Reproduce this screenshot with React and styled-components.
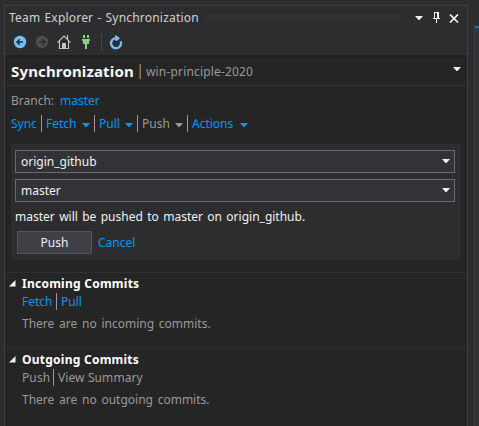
import React from 'react';
import styled, { createGlobalStyle } from 'styled-components';

const Global = createGlobalStyle`
  * { box-sizing: border-box; }
  body {
    margin: 0;
    background: #2d2d30;
    color: #999999;
    font: 12px/16px "Noto Sans", "Open Sans", sans-serif;
  }
`;

const Shell = styled.div`
  display: flex;
  justify-content: space-between;
  height: 426px;
  padding-left: 4px;
  overflow: hidden;
`;
const Panel = styled.section`
  display: flex;
  flex-direction: column;
  width: 464px;
  margin-top: 5px;
  border: 1px solid #3f3f46;
  border-bottom: 0;
  background: #252526;
`;
const Neighbour = styled.aside`
  width: 5px;
  margin-top: 26px;
  border-left: 1px solid #3f3f46;
  background: linear-gradient(#007acc 2px, #333337 2px);
`;
const Titlebar = styled.header`
  display: flex;
  align-items: center;
  height: 24px;
  padding: 0 8px 0 4px;
  background: #2d2d30;
`;
const WindowTitle = styled.h1`
  width: 190px;
  margin: 0 6px 0 0;
  color: #d0d0d0;
  font-size: 12px;
  font-weight: 400;
  letter-spacing: 0.2px;
  word-spacing: 0.8px;
  white-space: nowrap;
`;
const Grip = styled.div`
  width: 200px;
  height: 5px;
  margin-bottom: 1px;
  background-image:
    conic-gradient(from 270deg at 1px 1px, #4a4a4e 90deg, transparent 0),
    conic-gradient(from 270deg at 1px 1px, #4a4a4e 90deg, transparent 0);
  background-size: 4px 4px;
  background-position: 0 0, 2px 2px;
`;
const WindowButtons = styled.div`
  display: flex;
  align-items: center;
  gap: 9px;
  margin-left: auto;
  svg { display: block; }
  svg:first-child { margin-right: 1px; }
`;
const Toolbar = styled.nav`
  display: flex;
  align-items: center;
  height: 25px;
  padding: 0 0 1px 7px;
  background: #2d2d30;
  svg { display: block; flex: none; margin-right: 6px; }
`;
const ToolDivider = styled.i`
  width: 1px;
  height: 18px;
  margin: 0 6px 0 1px;
  background: #46464a;
`;
const PageHeader = styled.div`
  display: flex;
  align-items: center;
  height: 31px;
  padding: 1px 6px 0;
  border-bottom: 1px solid #2f2f32;
  background: linear-gradient(#202021, #252526 5px);
  > svg { margin-bottom: 4px; }
`;
const PageTitle = styled.h2`
  width: 128px;
  margin: 0;
  color: #f6f6f6;
  font-size: 15px;
  line-height: 22px;
  letter-spacing: 0.15px;
`;
const Project = styled.span`
  display: flex;
  flex: 1;
  align-items: center;
  gap: 5px;
  padding-top: 2px;
  letter-spacing: 0.17px;
  &::before {
    content: "";
    width: 2px;
    height: 15px;
    background: linear-gradient(90deg, #50555c 50%, #8f7250 50%);
  }
`;
const Branch = styled.div`
  display: flex;
  gap: 6px;
  padding: 7px 6px 0;
`;
const Link = styled.a`
  color: #0097fb;
  white-space: nowrap;
`;
const Commands = styled.div`
  display: flex;
  align-items: center;
  height: 17px;
  margin: ${p => p.$margin};
  letter-spacing: ${p => p.$spacing || '0'};
`;
const Command = styled.div`
  display: flex;
  align-items: center;
  justify-content: space-between;
  height: 17px;
  width: ${p => p.$width}px;
  padding-right: 4px;
  color: ${p => (p.$disabled ? '#999999' : '#0097fb')};
  & + & {
    border-left: 1px solid #999999;
    padding-left: 4px;
  }
  ${Link} { color: inherit; line-height: 17px; }
  svg { flex: none; margin-top: 3px; }
`;
const PushForm = styled.form`
  display: flex;
  flex-direction: column;
  height: 116px;
  margin: 12px 6px 12px;
  padding: 6px 6px 0 4px;
  background: #2d2d30;
`;
const Combo = styled.div`
  display: flex;
  align-items: center;
  justify-content: space-between;
  flex: none;
  height: 23px;
  margin-bottom: 6px;
  padding: 0 4px 0 5px;
  border: 1px solid #6a6a75;
  background: #333337;
  color: #f1f1f1;
  svg { margin-bottom: 1px; }
`;
const Notice = styled.p`
  margin: 1px 0 6px;
  color: #f1f1f1;
  word-spacing: 1.25px;
  white-space: nowrap;
`;
const Buttons = styled.div`
  display: flex;
  align-items: center;
  gap: 6px;
  padding-left: 2px;
`;
const PushButton = styled.button`
  width: 75px;
  height: 23px;
  padding: 0;
  border: 1px solid #555555;
  background: #3f3f46;
  color: #f1f1f1;
  font: inherit;
`;
const Section = styled.section`
  height: 76px;
  padding: 3px 6px 0 4px;
  border-top: 1px solid #2f2f32;
`;
const SectionTitle = styled.h3`
  display: flex;
  align-items: center;
  gap: 6px;
  height: 16px;
  margin: 0;
  color: #ffffff;
  font-size: 12px;
  letter-spacing: 0.25px;
  svg { margin-bottom: 1px; }
`;
const SectionBody = styled.div`
  padding-left: 13px;
`;
const Empty = styled.p`
  margin: 6px 0 0;
  word-spacing: 1.6px;
`;

const Caret = ({ color = 'currentColor' }) => (
  <svg width="8" height="4" viewBox="0 0 8 4"><path d="M0 0H8L4.5 4H3.5Z" fill={color} /></svg>
);
const Expander = () => (
  <svg width="7" height="7" viewBox="0 0 7 7"><path d="M6.5 0V6.5H0Z" fill="#f1f1f1" /></svg>
);
const Pin = () => (
  <svg width="7" height="12" viewBox="0 0 7 12" fill="#f1f1f1" shapeRendering="crispEdges">
    <path d="M1 0H6V6H7V7H4V11H3V7H0V6H1ZM2 1V6H4V1Z" fillRule="evenodd" />
  </svg>
);
const Close = () => (
  <svg width="10" height="9" viewBox="0 0 10 9"><path d="M1 .5L9 8.5M9 .5L1 8.5" stroke="#f1f1f1" strokeWidth="1.7" /></svg>
);
const Arrow = ({ forward }) => (
  <svg width="16" height="16" viewBox="0 0 16 16">
    <circle cx="8" cy="8" r="6.2" fill={forward ? '#4d4d50' : '#75beff'} />
    <path d={forward ? 'M5 8H11M8.3 5.3L11 8L8.3 10.7' : 'M11 8H5M7.7 5.3L5 8L7.7 10.7'} fill="none" stroke="#2d2d30" strokeWidth="1.6" />
  </svg>
);
const Home = () => (
  <svg width="16" height="16" viewBox="0 0 16 16">
    <path d="M1.5 8.7L8 2.1L14.5 8.7M3.5 7V14.5H12.5V7M11.5 1V5" fill="none" stroke="#c5c5c5" strokeWidth="1.1" />
    <path d="M6 9H10V15H6Z" fill="#c5c5c5" />
  </svg>
);
const Plug = () => (
  <svg width="16" height="16" viewBox="0 0 16 16" fill="#89d185" shapeRendering="crispEdges">
    <path d="M5 1H7V4H5ZM9 1H11V4H9ZM4 5H12V7H11V10H9V15H7V10H5V7H4Z" />
  </svg>
);
const Refresh = () => (
  <svg width="16" height="16" viewBox="0 0 16 16">
    <path d="M12.7 7.3A5 5 0 1 1 7.8 4.2" fill="none" stroke="#75beff" strokeWidth="2.3" />
    <path d="M7.2 0.8L12 4.2L9.2 6.8H7.2Z" fill="#75beff" />
  </svg>
);

const commands = [
  { label: 'Sync', width: 30 },
  { label: 'Fetch', width: 53, menu: true },
  { label: 'Pull', width: 43, menu: true },
  { label: 'Push', width: 50, menu: true, disabled: true },
  { label: 'Actions', width: 65, menu: true },
];

const CommitSection = ({ title, actions, disabled, children }) => (
  <Section>
    <SectionTitle><Expander />{title}</SectionTitle>
    <SectionBody>
      <Commands $margin="1px 0 0" $spacing={disabled ? '0.1px' : '0'}>
        {actions.map(([label, width]) => (
          <Command key={label} $width={width} $disabled={disabled}><Link>{label}</Link></Command>
        ))}
      </Commands>
      <Empty>{children}</Empty>
    </SectionBody>
  </Section>
);

export default function App() {
  return (
    <Shell>
      <Global />
      <Panel>
        <Titlebar>
          <WindowTitle>Team Explorer - Synchronization</WindowTitle>
          <Grip />
          <WindowButtons><Caret color="#f1f1f1" /><Pin /><Close /></WindowButtons>
        </Titlebar>
        <Toolbar>
          <Arrow /><Arrow forward /><Home /><Plug /><ToolDivider /><Refresh />
        </Toolbar>
        <PageHeader>
          <PageTitle>Synchronization</PageTitle>
          <Project>win-principle-2020</Project>
          <Caret color="#f1f1f1" />
        </PageHeader>
        <Branch><span>Branch:</span><Link>master</Link></Branch>
        <Commands $margin="6px 6px 0">
          {commands.map(c => (
            <Command key={c.label} $width={c.width} $disabled={c.disabled}>
              <Link>{c.label}</Link>{c.menu && <Caret />}
            </Command>
          ))}
        </Commands>
        <PushForm>
          <Combo>origin_github<Caret /></Combo>
          <Combo>master<Caret /></Combo>
          <Notice>master will be pushed to master on origin_github.</Notice>
          <Buttons><PushButton type="button">Push</PushButton><Link>Cancel</Link></Buttons>
        </PushForm>
        <CommitSection title="Incoming Commits" actions={[['Fetch', 34], ['Pull', 40]]}>
          There are no incoming commits.
        </CommitSection>
        <CommitSection title="Outgoing Commits" actions={[['Push', 31], ['View Summary', 110]]} disabled>
          There are no outgoing commits.
        </CommitSection>
      </Panel>
      <Neighbour />
    </Shell>
  );
}
